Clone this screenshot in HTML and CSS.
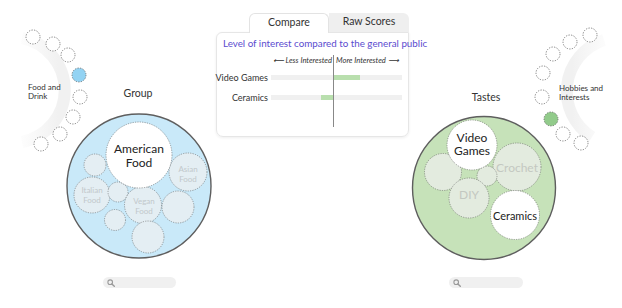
FILE: index.html
```html
<!DOCTYPE html>
<html lang="en">
<head>
  <meta charset="UTF-8">
  <title>Group vs Tastes</title>
  <link rel="stylesheet" href="styles.css">
</head>
<body>
  <div class="page">

    <!-- Left: group bubbles -->
    <div class="side side-left">
      <svg class="pack" width="216" height="277" viewBox="0 0 216 277">
        <defs>
          <linearGradient id="fadeLeft" gradientUnits="userSpaceOnUse" x1="14" y1="0" x2="58" y2="0">
            <stop offset="0" stop-color="#f3f3f3" stop-opacity="0"/>
            <stop offset="1" stop-color="#f1f1f1"/>
          </linearGradient>
        </defs>
        <path class="band" d="M 22 38 A 53 53 0 0 1 22 142" stroke="url(#fadeLeft)"/>
        <circle class="dot" cx="33" cy="37" r="7"/>
        <circle class="dot" cx="53" cy="44" r="7"/>
        <circle class="dot" cx="68" cy="55" r="7"/>
        <circle class="dot dot-blue" cx="79" cy="75" r="7"/>
        <circle class="dot" cx="80" cy="97" r="7"/>
        <circle class="dot" cx="73" cy="117" r="7"/>
        <circle class="dot" cx="60" cy="134" r="7"/>
        <circle class="dot" cx="41" cy="144" r="7"/>
        <text class="cat" x="28" y="87">Food and</text>
        <text class="cat" x="28" y="96">Drink</text>

        <text class="title" x="138" y="93" text-anchor="middle">Group</text>
        <circle class="outer outer-blue" cx="139" cy="186" r="72"/>
        <circle class="bubble" cx="95" cy="165" r="11"/>
        <circle class="bubble" cx="92" cy="195" r="18"/>
        <circle class="bubble" cx="118" cy="192" r="10"/>
        <circle class="bubble" cx="143" cy="205" r="18.5"/>
        <circle class="bubble" cx="178" cy="207" r="16"/>
        <circle class="bubble" cx="115" cy="220" r="10.5"/>
        <circle class="bubble" cx="148" cy="237" r="16"/>
        <circle class="bubble" cx="188" cy="172" r="19"/>
        <circle class="bubble bubble-top" cx="139" cy="155" r="33"/>
        <text class="big" x="139" y="148.5" text-anchor="middle">American</text>
        <text class="big" x="139" y="162" text-anchor="middle">Food</text>
        <text class="faint" x="188" y="168.5" text-anchor="middle">Asian</text>
        <text class="faint" x="188" y="178.5" text-anchor="middle">Food</text>
        <text class="faint" x="92" y="190" text-anchor="middle">Italian</text>
        <text class="faint" x="92" y="199.5" text-anchor="middle">Food</text>
        <text class="faint" x="144" y="201" text-anchor="middle">Vegan</text>
        <text class="faint" x="144" y="211" text-anchor="middle">Food</text>
      </svg>
      <div class="search search-left">
        <svg width="8" height="8" viewBox="0 0 8 8"><circle cx="3.2" cy="3.2" r="2.3" fill="none" stroke="#9a9a9a" stroke-width="1.1"/><path d="M4.9 4.9 L7.3 7.3" stroke="#9a9a9a" stroke-width="1.4" stroke-linecap="round"/></svg>
      </div>
    </div>

    <!-- Middle: compare card -->
    <div class="compare">
      <div class="tabs">
        <div class="tab tab-active">Compare</div>
        <div class="tab">Raw Scores</div>
      </div>
      <div class="panel">
        <div class="panel-title">Level of interest compared to the general public</div>
        <div class="chart">
          <div class="axis">
            <span class="less">⟵ Less Interested</span>
            <span class="more">More Interested ⟶</span>
          </div>
          <div class="row">
            <div class="label">Video Games</div>
            <div class="track"><div class="bar" style="left:62px;width:27px"></div></div>
          </div>
          <div class="row">
            <div class="label">Ceramics</div>
            <div class="track"><div class="bar" style="left:50px;width:12px"></div></div>
          </div>
          <div class="zero"></div>
        </div>
      </div>
    </div>

    <!-- Right: tastes bubbles -->
    <div class="side side-right">
      <svg class="pack" width="212" height="277" viewBox="410 0 212 277">
        <defs>
          <linearGradient id="fadeRight" gradientUnits="userSpaceOnUse" x1="572" y1="0" x2="616" y2="0">
            <stop offset="0" stop-color="#f1f1f1"/>
            <stop offset="1" stop-color="#f3f3f3" stop-opacity="0"/>
          </linearGradient>
        </defs>
        <path class="band" d="M 604 40 A 54 54 0 0 0 592 137" stroke="url(#fadeRight)"/>
        <circle class="dot" cx="590" cy="35" r="7"/>
        <circle class="dot" cx="570" cy="42" r="7"/>
        <circle class="dot" cx="553" cy="54" r="7"/>
        <circle class="dot" cx="543" cy="73" r="7"/>
        <circle class="dot" cx="542" cy="97" r="7"/>
        <circle class="dot dot-green" cx="551" cy="119" r="7"/>
        <circle class="dot" cx="563" cy="134" r="7"/>
        <circle class="dot" cx="581" cy="143" r="7"/>
        <text class="cat" x="559" y="88">Hobbies and</text>
        <text class="cat" x="559" y="97">Interests</text>

        <text class="title" x="486" y="97" text-anchor="middle">Tastes</text>
        <circle class="outer outer-green" cx="484" cy="188" r="71.5"/>
        <circle class="bubble bubble-green" cx="443" cy="172" r="18.5"/>
        <circle class="bubble bubble-green" cx="517" cy="167" r="24"/>
        <circle class="bubble bubble-green" cx="487" cy="176" r="10"/>
        <circle class="bubble bubble-green" cx="469" cy="198" r="20"/>
        <circle class="bubble bubble-top" cx="472" cy="145" r="25"/>
        <circle class="bubble bubble-top" cx="515" cy="215" r="24.5"/>
        <text class="big" x="472" y="137" text-anchor="middle">Video</text>
        <text class="big" x="472" y="150.5" text-anchor="middle">Games</text>
        <text class="faint faint-large" x="517" y="167" text-anchor="middle">Crochet</text>
        <text class="faint faint-large" x="469" y="194.5" text-anchor="middle">DIY</text>
        <text class="big big-small" x="515" y="215" text-anchor="middle">Ceramics</text>
      </svg>
      <div class="search search-right">
        <svg width="8" height="8" viewBox="0 0 8 8"><circle cx="3.2" cy="3.2" r="2.3" fill="none" stroke="#9a9a9a" stroke-width="1.1"/><path d="M4.9 4.9 L7.3 7.3" stroke="#9a9a9a" stroke-width="1.4" stroke-linecap="round"/></svg>
      </div>
    </div>

  </div>
</body>
</html>
```

FILE: styles.css
```css
body {
  margin: 0;
  background: #fff;
  font-family: Lato, "Open Sans", sans-serif;
  color: #333;
}
.page {
  display: flex;
  width: 622px;
  height: 308px;
  overflow: hidden;
}

/* bubble columns */
.side-left {
  width: 216px;
}
.side-right {
  width: 212px;
}
.pack {
  display: block;
}
.pack text {
  dominant-baseline: central;
}
.band {
  fill: none;
  stroke-width: 12;
}
.dot {
  fill: #fff;
  stroke: #555;
  stroke-width: 0.7;
  stroke-dasharray: 1.3 1.3;
}
.dot-blue {
  fill: #93d3f3;
}
.dot-green {
  fill: #92cb8b;
}
.cat {
  font-size: 8px;
  fill: #333;
}
.title {
  font-size: 10.5px;
  fill: #333;
}
.outer {
  stroke: #5e5e5e;
  stroke-width: 1.4;
}
.outer-blue {
  fill: #c9e9f9;
}
.outer-green {
  fill: #c6e2b9;
}
.bubble {
  fill: #e4eef3;
  stroke: #666;
  stroke-width: 0.6;
  stroke-dasharray: 1.2 1.2;
}
.bubble-green {
  fill: #e3ebdf;
}
.bubble-top {
  fill: #fff;
}
.big {
  font-size: 12px;
  fill: #222;
}
.big-small {
  font-size: 11px;
}
.faint {
  font-size: 8px;
  fill: #c2c8cb;
}
.faint-large {
  font-size: 12px;
  fill: #c3c8c1;
}

.search {
  display: flex;
  align-items: center;
  height: 11px;
  padding-left: 4px;
  background: #f0f0f0;
  border-radius: 6px;
}
.search-left {
  width: 69px;
  margin-left: 103px;
}
.search-right {
  width: 70px;
  margin-left: 39px;
}

/* compare card */
.compare {
  width: 194px;
  padding-top: 13px;
}
.tabs {
  display: flex;
  margin-left: 33px;
}
.tab {
  width: 80px;
  height: 19px;
  line-height: 16px;
  text-align: center;
  font-size: 10.5px;
  color: #333;
  background: #efefef;
  border-top-right-radius: 6px;
}
.tab-active {
  position: relative;
  z-index: 1;
  box-sizing: border-box;
  height: 20px;
  margin-bottom: -1px;
  background: #fff;
  border: 1px solid #e3e3e3;
  border-bottom: none;
  border-radius: 6px 6px 0 0;
}
.panel {
  width: 193px;
  height: 105px;
  box-sizing: border-box;
  padding: 4px 6px 0 6px;
  border: 1px solid #e6e6e6;
  border-radius: 6px 0 7px 7px;
  box-shadow: 0 1px 3px rgba(0, 0, 0, 0.07);
}
.panel-title {
  font-size: 9.8px;
  line-height: 12px;
  color: #5b4ccf;
  white-space: nowrap;
}
.chart {
  position: relative;
  margin-top: 6px;
  height: 72px;
}
.axis {
  display: flex;
  margin-left: 48px;
  width: 132px;
  height: 10px;
  line-height: 10px;
  font-size: 7.6px;
  font-style: italic;
  color: #333;
  white-space: nowrap;
}
.less {
  width: 61px;
  padding-right: 2px;
  text-align: right;
}
.more {
  padding-left: 2px;
}
.row {
  display: flex;
  align-items: center;
  gap: 3px;
  height: 12px;
  margin-top: 6px;
}
.row + .row {
  margin-top: 8px;
}
.label {
  display: flex;
  justify-content: flex-end;
  flex-shrink: 0;
  width: 45px;
  font-size: 9px;
  white-space: nowrap;
  color: #333;
}
.track {
  position: relative;
  width: 132px;
  height: 5px;
  background: #f0f0f0;
}
.bar {
  position: absolute;
  top: 0;
  height: 5px;
  background: #b9dfae;
}
.zero {
  position: absolute;
  top: 0;
  bottom: 0;
  left: 110px;
  width: 1px;
  background: #888;
}
```
